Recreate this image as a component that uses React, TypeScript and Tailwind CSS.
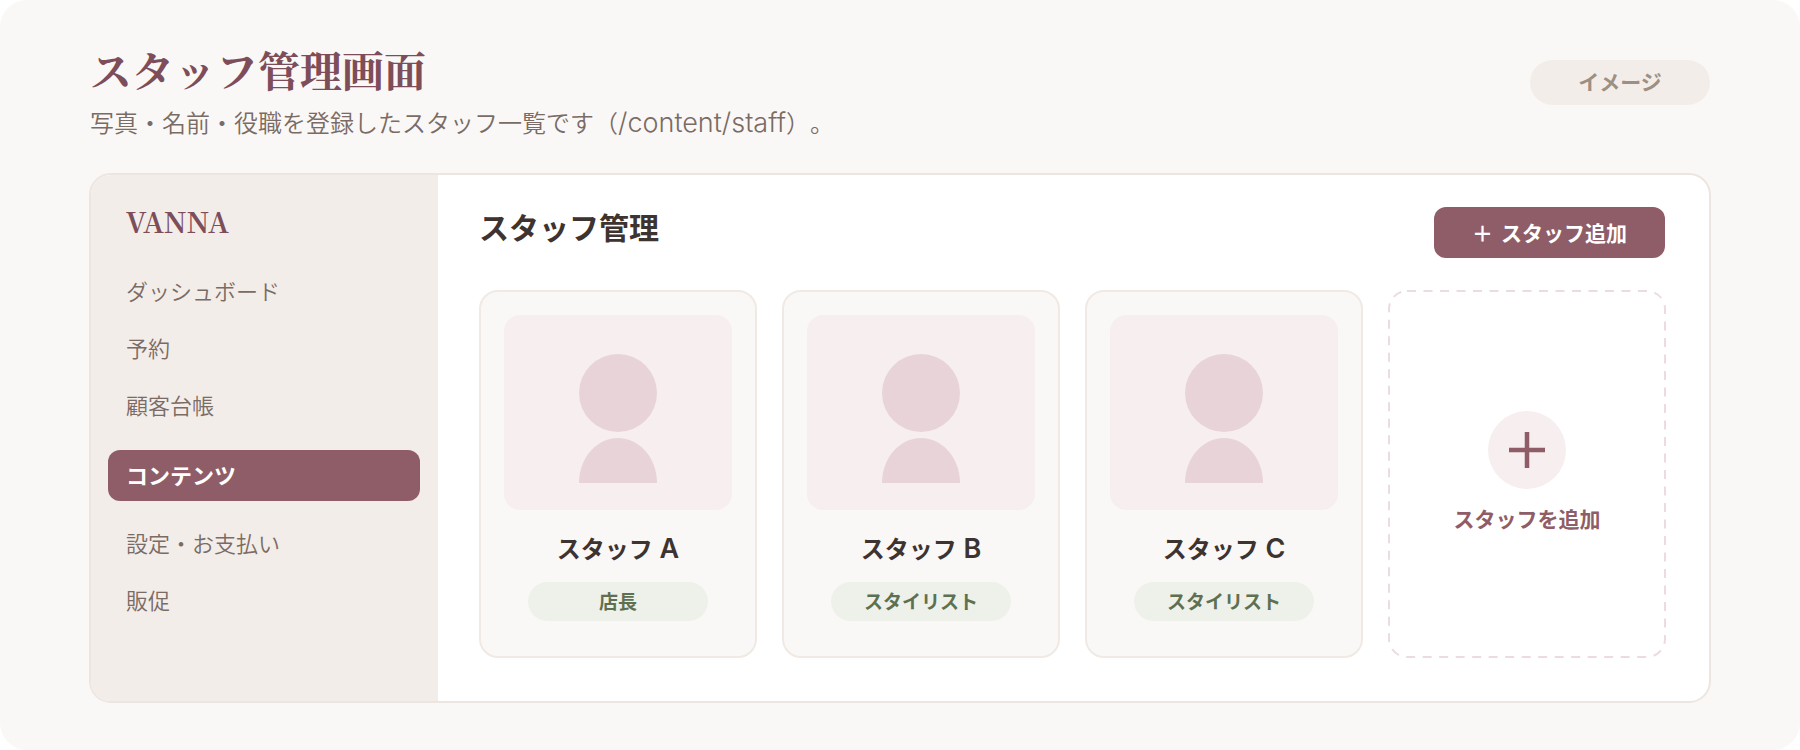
const SANS = "font-['Noto_Sans_CJK_JP',sans-serif]";
const SERIF = "font-['Noto_Serif_CJK_JP','Liberation_Serif','Noto_Sans_CJK_JP',serif]";
const LATIN = "font-['Inter','Noto_Sans_CJK_JP',sans-serif]";

type NavItem = { label: string; active?: boolean };

const NAV: NavItem[] = [
  { label: 'ダッシュボード' },
  { label: '予約' },
  { label: '顧客台帳' },
  { label: 'コンテンツ', active: true },
  { label: '設定・お支払い' },
  { label: '販促' },
];

const STAFF = [
  { letter: 'A', role: '店長' },
  { letter: 'B', role: 'スタイリスト' },
  { letter: 'C', role: 'スタイリスト' },
];

function Sidebar() {
  return (
    <aside className="w-[347px] shrink-0 bg-[#f3ede9] pt-[26px] pr-[18px] pl-[17px]">
      <p className={`px-[18px] text-[28px] leading-10 font-bold text-[#7d4e5a] ${SERIF}`}>VANNA</p>
      <nav className="mt-[21px] flex flex-col">
        {NAV.map((item) =>
          item.active ? (
            <a
              key={item.label}
              href="#"
              aria-current="page"
              className="mt-[17px] mb-[13px] rounded-xl bg-[#8f5d68] px-[18px] pb-0.5 text-[22px] leading-[49px] font-bold text-white"
            >
              {item.label}
            </a>
          ) : (
            <a key={item.label} href="#" className="px-[18px] text-[22px] leading-[57px] font-[350] text-[#7a6b64]">
              {item.label}
            </a>
          ),
        )}
      </nav>
    </aside>
  );
}

function Portrait() {
  return (
    <div className="flex h-[195px] justify-center rounded-2xl bg-[#f7eeef] pt-[39px]">
      <svg width="78" height="129" viewBox="0 0 78 129" fill="#e8d4d8" aria-hidden="true">
        <circle cx="39" cy="39" r="39" />
        <path d="M0 129C0 104 17.500 84 39 84S78 104 78 129Z" />
      </svg>
    </div>
  );
}

function StaffCard({ letter, role }: { letter: string; role: string }) {
  return (
    <li className="flex h-[368px] flex-col rounded-[19px] border-2 border-[#f0e9e4] bg-[#faf8f6] px-[23px] pt-[23px]">
      <Portrait />
      <h3 className="mt-5 h-9 text-center text-2xl leading-9 font-semibold text-[#3d3330]">
        スタッフ<span className={`text-[27px] leading-none font-semibold ${LATIN}`}> {letter}</span>
      </h3>
      <p className="mx-auto mt-4 w-[180px] rounded-full bg-[#eef1ea] pb-0.5 text-center text-[19px] leading-[37px] font-semibold text-[#5e7052]">
        {role}
      </p>
    </li>
  );
}

function AddCard() {
  return (
    <li className="flex h-[368px]">
      <button type="button" className="relative flex flex-1 flex-col items-center pt-[121px]">
        <svg className="absolute inset-0 h-full w-full overflow-visible" fill="none" aria-hidden="true">
          <rect
            x="1"
            y="1"
            rx="18"
            className="h-[calc(100%-2px)] w-[calc(100%-2px)]"
            stroke="#ecdce0"
            strokeWidth="2"
            strokeDasharray="9 7.5"
          />
        </svg>
        <svg width="78" height="78" viewBox="0 0 78 78" aria-hidden="true">
          <circle cx="39" cy="39" r="39" fill="#f7eeef" />
          <path d="M39 21V57M21 39H57" stroke="#8f5d68" strokeWidth="4.500" />
        </svg>
        <span className="mt-[13px] text-[21px] leading-8 font-semibold text-[#8f5d68]">スタッフを追加</span>
      </button>
    </li>
  );
}

export default function App() {
  return (
    <div className={`min-h-screen rounded-[27px] bg-[#faf8f6] px-[89px] pt-[45px] pb-[46px] ${SANS}`}>
      <header className="flex items-start justify-between px-px">
        <div>
          <h1 className={`text-[42px] leading-[48px] font-bold text-[#7d4e5a] ${SERIF}`}>スタッフ管理画面</h1>
          <p className="mt-[11px] h-9 text-2xl leading-9 font-[350] text-[#7a6b64] [text-spacing-trim:space-all]">
            写真・名前・役職を登録したスタッフ一覧です（
            <span className={`text-[27px] leading-none ${LATIN}`}>/content/staff</span>）。
          </p>
        </div>
        <span className="mt-[15px] w-[180px] rounded-full bg-[#f3ede9] pb-0.5 text-center text-[21px] leading-[43px] font-semibold text-[#9c8f84]">
          イメージ
        </span>
      </header>

      <div className="mt-[33px] flex min-h-[530px] overflow-hidden rounded-[22px] border-2 border-[#ede5df] bg-white">
        <Sidebar />
        <main className="flex-1 pt-8 pr-[43px] pb-[43px] pl-[41px]">
          <div className="flex items-start justify-between pr-px">
            <h2 className="text-[30px] leading-[38px] font-bold text-[#3d3330]">スタッフ管理</h2>
            <button
              type="button"
              className="flex w-[231px] justify-center gap-2 rounded-xl bg-[#8f5d68] text-[21px] leading-[51px] font-semibold text-white"
            >
              <span>＋</span>
              <span>スタッフ追加</span>
            </button>
          </div>
          <ul className="mt-8 grid grid-cols-4 gap-[25px]">
            {STAFF.map((person) => (
              <StaffCard key={person.letter} {...person} />
            ))}
            <AddCard />
          </ul>
        </main>
      </div>
    </div>
  );
}
